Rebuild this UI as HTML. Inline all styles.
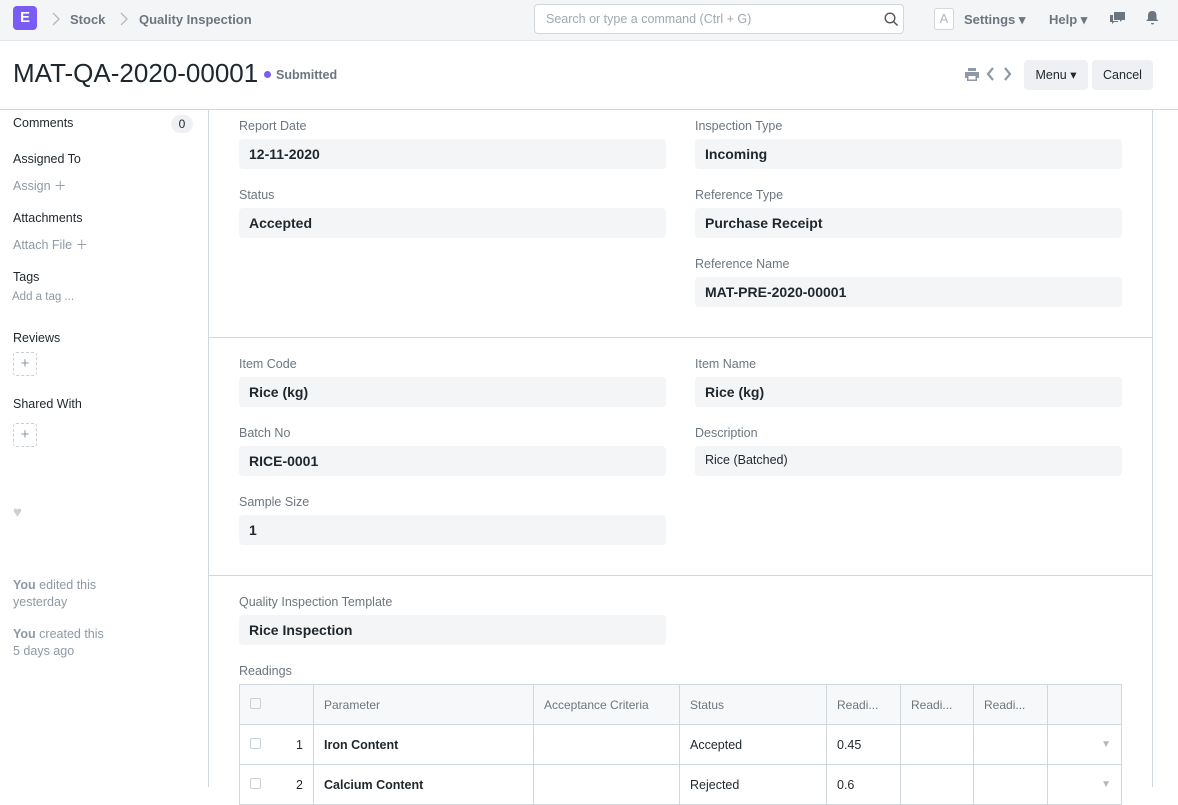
<!DOCTYPE html>
<html><head><meta charset="utf-8"><style>
*{box-sizing:border-box;margin:0;padding:0}
body{width:1178px;height:787px;overflow:hidden;font-family:"Liberation Sans",sans-serif;color:#1f272e;background:#fff;position:relative}
.a{position:absolute;white-space:nowrap}
.nav{left:0;top:0;width:1178px;height:41px;background:#f4f5f7;border-bottom:1px solid #e2e6e9}
.lbl{font-size:12.5px;color:#6c7680}
.inp{background:#f4f5f6;border-radius:4px;height:30px;font-size:14px;font-weight:bold;color:#1f272e;padding:7px 10px}
.sb{font-size:12.5px;color:#1f272e}
.sg{font-size:12.5px;color:#8d99a6}
.hl{height:1px;background:#d1d8dd}
table{border-collapse:collapse;font-size:12.5px}
td{border:1px solid #d1d8dd;height:40px;padding:0 10px}
</style></head><body>
<div class="a nav"></div>
<div class="a" style="left:13px;top:6px;width:24px;height:24px;background:#7b5cf6;border-radius:4px;color:#fff;font-weight:bold;font-size:15px;text-align:center;line-height:24px">E</div>
<svg class="a" style="left:52px;top:12px" width="8" height="14" viewBox="0 0 8 14"><path d="M1 1l6 6-6 6" fill="none" stroke="#b0b8c0" stroke-width="1.3"/></svg>
<div class="a" style="left:70px;top:12px;font-size:13px;font-weight:bold;color:#6c7680">Stock</div>
<svg class="a" style="left:120px;top:12px" width="8" height="14" viewBox="0 0 8 14"><path d="M1 1l6 6-6 6" fill="none" stroke="#b0b8c0" stroke-width="1.3"/></svg>
<div class="a" style="left:139px;top:12px;font-size:13px;font-weight:bold;color:#6c7680">Quality Inspection</div>
<div class="a" style="left:534px;top:4px;width:370px;height:30px;background:#fff;border:1px solid #d1d8dd;border-radius:4px;font-size:12.5px;color:#a0a8b0;padding:7px 11px">Search or type a command (Ctrl + G)</div>
<svg class="a" style="left:884px;top:12px" width="15" height="15" viewBox="0 0 15 15"><circle cx="6" cy="6" r="4.8" fill="none" stroke="#555" stroke-width="1.4"/><path d="M9.5 9.5L13.5 13.5" stroke="#555" stroke-width="1.5"/></svg>
<div class="a" style="left:934px;top:8px;width:20px;height:22px;border:1px solid #d1d8dd;border-radius:3px;color:#b0b8c0;font-size:13px;text-align:center;line-height:20px;background:#fff">A</div>
<div class="a" style="left:964px;top:12px;font-size:13px;font-weight:bold;color:#6c7680">Settings ▾</div>
<div class="a" style="left:1049px;top:12px;font-size:13px;font-weight:bold;color:#6c7680">Help ▾</div>
<svg class="a" style="left:1110px;top:12px" width="15" height="13" viewBox="0 0 15 13"><path d="M4 0h11v8h-3l-2 2V8H4z" fill="#6c7680"/><path d="M0 3h3v6h5v1H4l-2 2v-2H0z" fill="#6c7680"/></svg>
<svg class="a" style="left:1146px;top:11px" width="13" height="14" viewBox="0 0 13 14"><path d="M6.5 0c3 0 4 2 4 5v3l2 2H0l2-2V5c0-3 1-5 4.5-5z M5 12h3a1.5 1.5 0 0 1-3 0z" fill="#6c7680"/></svg>

<div class="a" style="left:13px;top:58px;font-size:26px;color:#1f272e">MAT-QA-2020-00001</div>
<div class="a" style="left:264px;top:71px;width:7px;height:7px;border-radius:50%;background:#7b5cf6"></div>
<div class="a" style="left:276px;top:68px;font-size:12.5px;font-weight:bold;color:#6c7680">Submitted</div>
<svg class="a" style="left:965px;top:68px" width="14" height="13" viewBox="0 0 14 13"><path d="M3 0h8v3H3z M0 4h14v6h-2v3H2v-3H0z" fill="#8d99a6"/><rect x="3.5" y="8" width="7" height="3.5" fill="#fff"/></svg>
<svg class="a" style="left:986px;top:67px" width="26" height="14" viewBox="0 0 26 14"><path d="M7 1L2 7l5 6M19 1l5 6-5 6" fill="none" stroke="#8d99a6" stroke-width="2.2"/></svg>
<div class="a" style="left:1024px;top:60px;width:64px;height:30px;background:#eef0f3;border-radius:4px;font-size:12.5px;text-align:center;line-height:30px">Menu ▾</div>
<div class="a" style="left:1092px;top:60px;width:61px;height:30px;background:#eef0f3;border-radius:4px;font-size:12.5px;text-align:center;line-height:30px">Cancel</div>
<div class="a hl" style="left:0;top:109px;width:1178px"></div>

<div class="a sb" style="left:13px;top:116px">Comments</div>
<div class="a" style="left:171px;top:115px;width:22px;height:18px;border-radius:9px;background:#eef0f3;font-size:12px;text-align:center;line-height:18px">0</div>
<div class="a sb" style="left:13px;top:152px">Assigned To</div>
<div class="a sg" style="left:13px;top:175px">Assign ＋</div>
<div class="a sb" style="left:13px;top:211px">Attachments</div>
<div class="a sg" style="left:13px;top:234px">Attach File ＋</div>
<div class="a sb" style="left:13px;top:270px">Tags</div>
<div class="a sg" style="left:12px;top:291px;font-size:11.5px">Add a tag ...</div>
<div class="a sb" style="left:13px;top:331px">Reviews</div>
<div class="a" style="left:13px;top:352px;width:24px;height:24px;border:1px dashed #c8cfd5;border-radius:3px;color:#8d99a6;text-align:center;line-height:22px;font-size:15px">+</div>
<div class="a sb" style="left:13px;top:397px">Shared With</div>
<div class="a" style="left:13px;top:423px;width:24px;height:24px;border:1px dashed #c8cfd5;border-radius:3px;color:#8d99a6;text-align:center;line-height:22px;font-size:15px">+</div>
<div class="a" style="left:13px;top:504px;color:#c8cfd5;font-size:15px">♥</div>
<div class="a sg" style="left:13px;top:577px;line-height:17px">
<b>You</b> edited this<br>yesterday</div>
<div class="a sg" style="left:13px;top:626px;line-height:17px"><b>You</b> created this<br>5 days ago</div>

<div class="a" style="left:208px;top:110px;width:1px;height:677px;background:#d1d8dd"></div>
<div class="a" style="left:1152px;top:110px;width:1px;height:677px;background:#d1d8dd"></div>
<div class="a hl" style="left:208px;top:337px;width:945px"></div>
<div class="a hl" style="left:208px;top:575px;width:945px"></div>

<div class="a lbl" style="left:239px;top:119px">Report Date</div>
<div class="a inp" style="left:239px;top:139px;width:427px">12-11-2020</div>
<div class="a lbl" style="left:239px;top:188px">Status</div>
<div class="a inp" style="left:239px;top:208px;width:427px">Accepted</div>
<div class="a lbl" style="left:695px;top:119px">Inspection Type</div>
<div class="a inp" style="left:695px;top:139px;width:427px">Incoming</div>
<div class="a lbl" style="left:695px;top:188px">Reference Type</div>
<div class="a inp" style="left:695px;top:208px;width:427px">Purchase Receipt</div>
<div class="a lbl" style="left:695px;top:257px">Reference Name</div>
<div class="a inp" style="left:695px;top:277px;width:427px">MAT-PRE-2020-00001</div>

<div class="a lbl" style="left:239px;top:357px">Item Code</div>
<div class="a inp" style="left:239px;top:377px;width:427px">Rice (kg)</div>
<div class="a lbl" style="left:239px;top:426px">Batch No</div>
<div class="a inp" style="left:239px;top:446px;width:427px">RICE-0001</div>
<div class="a lbl" style="left:239px;top:495px">Sample Size</div>
<div class="a inp" style="left:239px;top:515px;width:427px">1</div>
<div class="a lbl" style="left:695px;top:357px">Item Name</div>
<div class="a inp" style="left:695px;top:377px;width:427px">Rice (kg)</div>
<div class="a lbl" style="left:695px;top:426px">Description</div>
<div class="a inp" style="left:695px;top:446px;width:427px;font-weight:normal;font-size:12.5px">Rice (Batched)</div>

<div class="a lbl" style="left:239px;top:595px">Quality Inspection Template</div>
<div class="a inp" style="left:239px;top:615px;width:427px">Rice Inspection</div>
<div class="a lbl" style="left:239px;top:664px">Readings</div>

<table class="a" style="left:239px;top:684px;width:883px">
<tr style="background:#f7f8f9;color:#6c7680;font-size:12px"><td style="width:74px"><span style="display:inline-block;width:11px;height:11px;border:1px solid #c8cfd5;border-radius:2px"></span></td><td style="width:220px">Parameter</td><td style="width:146px">Acceptance Criteria</td><td style="width:147px">Status</td><td style="width:74px">Readi...</td><td style="width:73px">Readi...</td><td style="width:74px">Readi...</td><td></td></tr>
<tr><td><span style="display:inline-block;width:11px;height:11px;border:1px solid #c8cfd5;border-radius:2px"></span><span style="float:right">1</span></td><td style="font-weight:bold">Iron Content</td><td></td><td>Accepted</td><td>0.45</td><td></td><td></td><td style="text-align:right;color:#b0b8c0;font-size:10px">▼</td></tr>
<tr><td><span style="display:inline-block;width:11px;height:11px;border:1px solid #c8cfd5;border-radius:2px"></span><span style="float:right">2</span></td><td style="font-weight:bold">Calcium Content</td><td></td><td>Rejected</td><td>0.6</td><td></td><td></td><td style="text-align:right;color:#b0b8c0;font-size:10px">▼</td></tr>
</table>
</body></html>
